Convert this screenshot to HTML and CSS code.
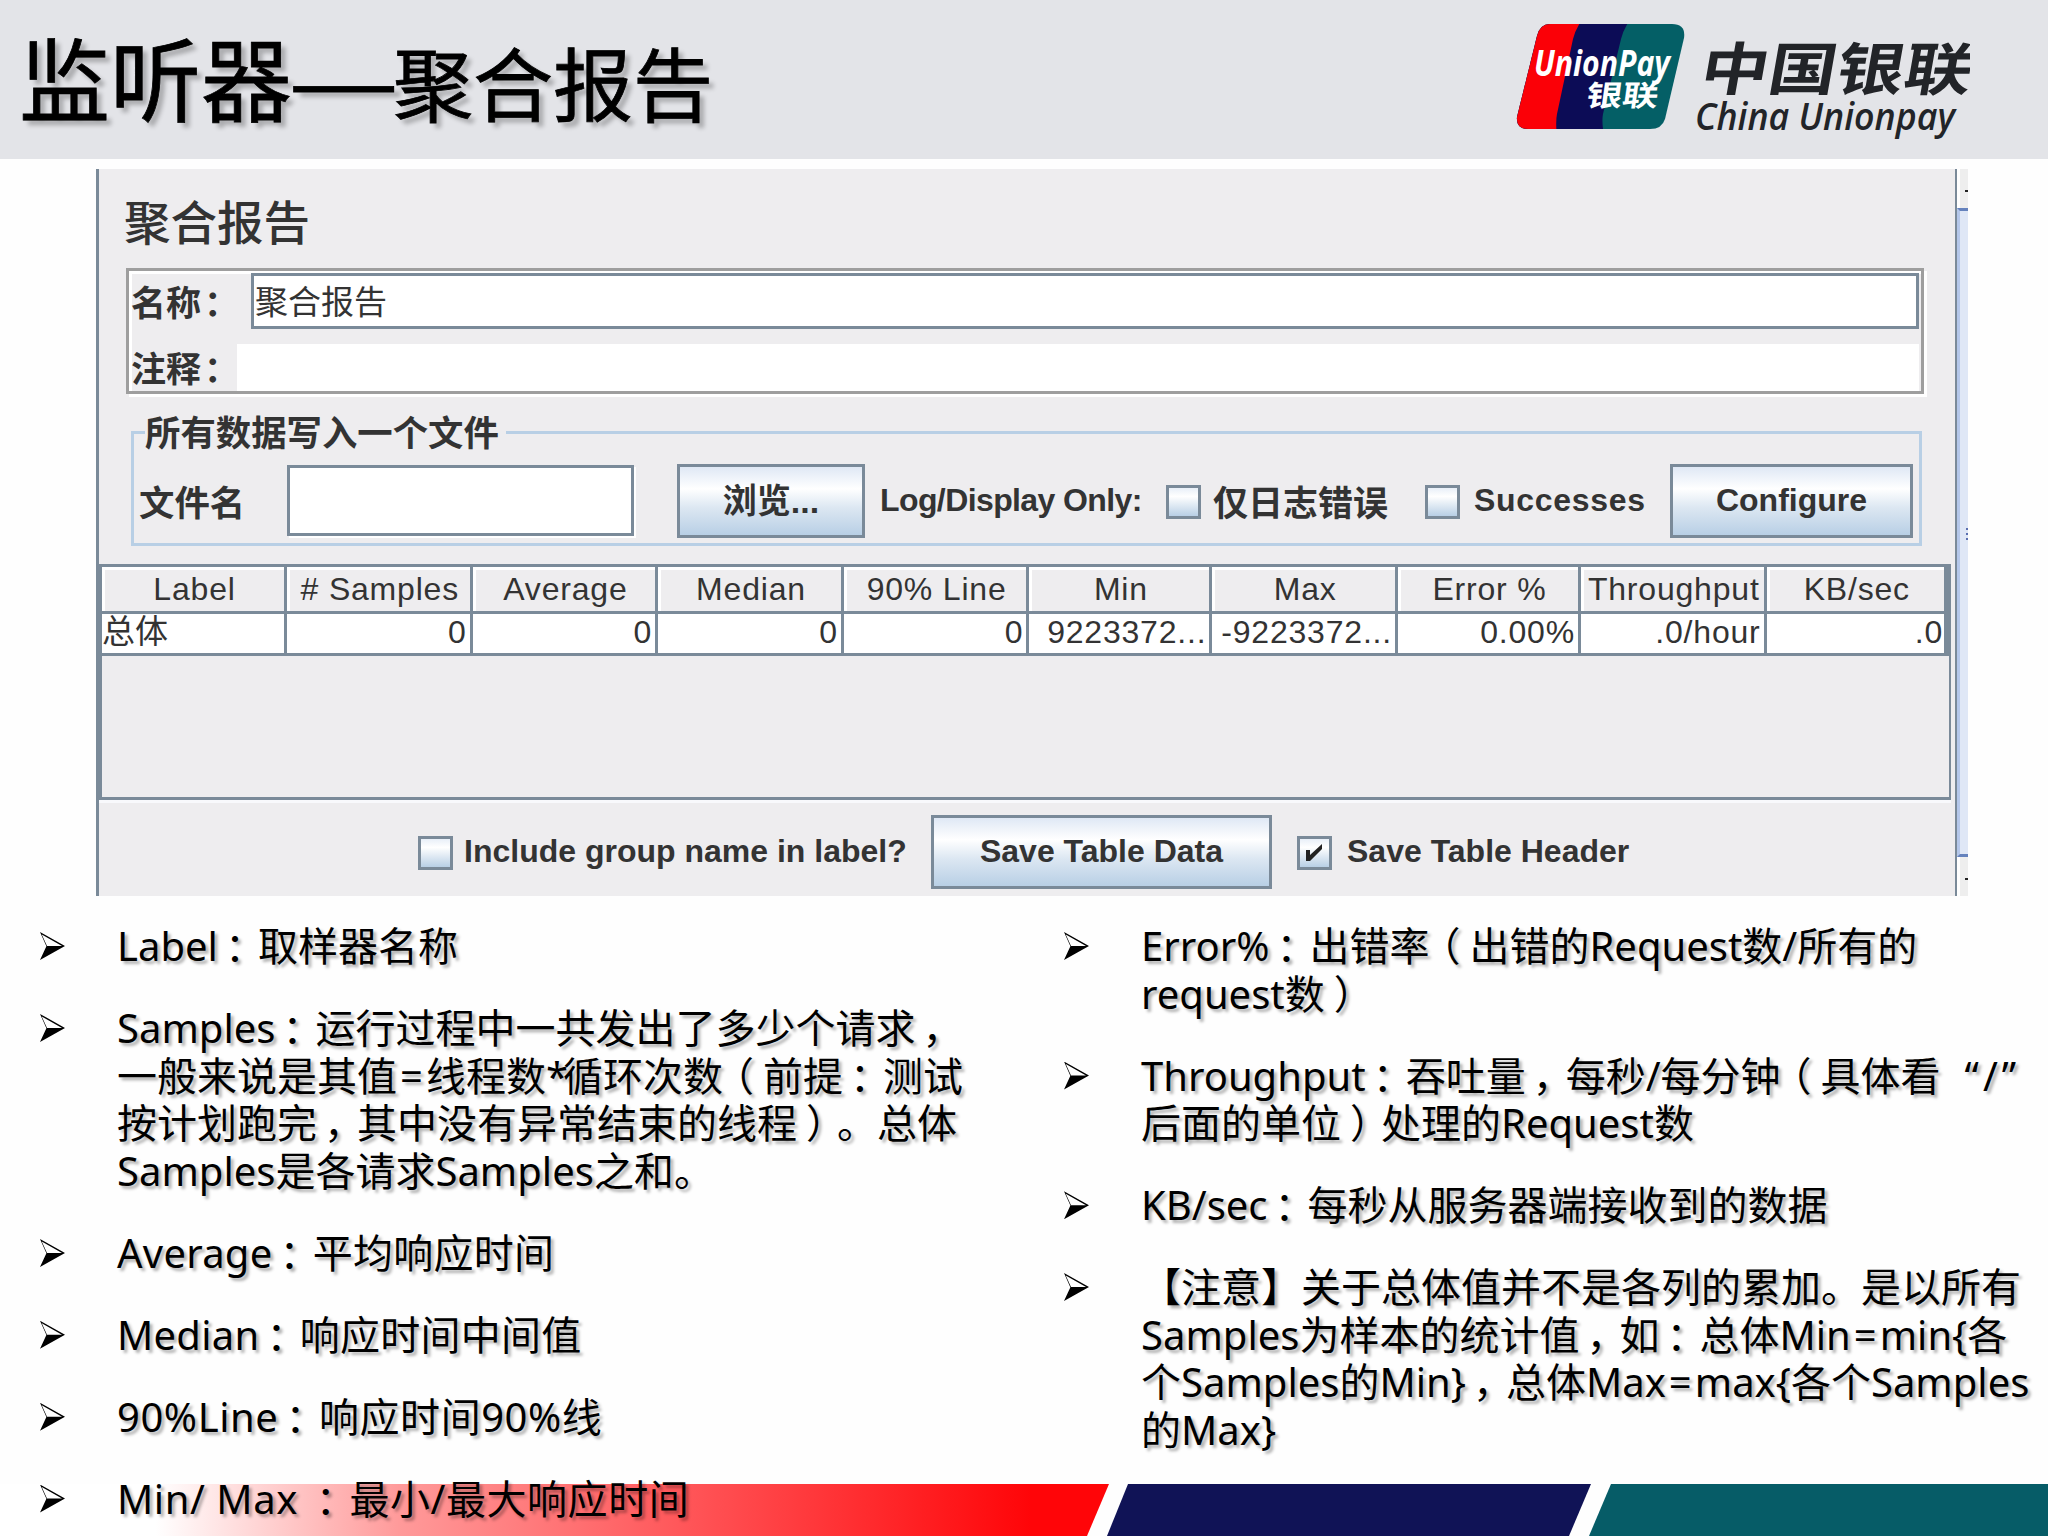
FILE: index.html
```html
<!DOCTYPE html>
<html lang="zh-CN">
<head>
    <meta charset="UTF-8">
    <meta name="viewport" content="width=device-width, initial-scale=1.0">
    <title>监听器—聚合报告</title>
    <link rel="stylesheet" href="styles.css">
</head>
<body>

<header class="header">
    <h1>监听器<span class="dash">—</span><small>聚合报告</small></h1>
    <svg class="logo" width="470" height="130" viewBox="0 0 470 130">
        <defs>
            <clipPath id="card">
                <path d="M50 10H172Q186 10 184 24L165 105Q162 115 150 115H28Q16 115 17 103L37 22Q40 10 50 10Z"/>
            </clipPath>
        </defs>
        <g clip-path="url(#card)">
            <rect width="190" height="130" fill="#045f66"/>
            <path d="M0 0H134Q124 13 121 25L103 100Q101 110 106 130H0Z" fill="#0c0c56"/>
            <path d="M0 0H86Q76 13 73 25L57 100Q55 110 58 130H0Z" fill="#fb0007"/>
        </g>
        <g class="logo-card">
            <text x="34" y="62" font-size="35" textLength="136" lengthAdjust="spacingAndGlyphs" font-style="italic">UnionPay</text>
            <text transform="translate(85 92) skewX(-8)" font-size="29" textLength="72" lengthAdjust="spacingAndGlyphs">银联</text>
        </g>
        <g class="logo-name">
            <text transform="translate(198 76) skewX(-10)" font-size="57" textLength="271" lengthAdjust="spacingAndGlyphs" class="cn">中国银联</text>
            <text x="195" y="116" font-size="38" textLength="260" lengthAdjust="spacingAndGlyphs" class="en">China Unionpay</text>
        </g>
    </svg>
</header>

<section class="window">
    <div class="main">
        <h2>聚合报告</h2>

        <div class="name-box">
            <label><span>名称<q>：</q></span><div class="field">聚合报告</div></label>
            <label><span>注释<q>：</q></span><div class="field plain"></div></label>
        </div>

        <div class="file-box">
            <div class="legend">所有数据写入一个文件</div>
            <span class="file-label">文件名</span>
            <div class="file-input"></div>
            <div class="button browse">浏览...</div>
            <span class="log">Log/Display Only:</span>
            <i class="check"></i>
            <span class="errors">仅日志错误</span>
            <i class="check"></i>
            <span class="successes">Successes</span>
            <div class="button configure">Configure</div>
        </div>

        <div class="table-box">
            <table>
                <colgroup>
                    <col class="c1"><col class="c2"><col class="c2"><col class="c2"><col class="c2">
                    <col class="c3"><col class="c2"><col class="c3"><col class="c2"><col>
                </colgroup>
                <tr>
                    <th>Label</th>
                    <th># Samples</th>
                    <th>Average</th>
                    <th>Median</th>
                    <th>90% Line</th>
                    <th>Min</th>
                    <th>Max</th>
                    <th>Error %</th>
                    <th>Throughput</th>
                    <th>KB/sec</th>
                </tr>
                <tr>
                    <td class="first">总体</td>
                    <td>0</td>
                    <td>0</td>
                    <td>0</td>
                    <td>0</td>
                    <td>9223372...</td>
                    <td>-9223372...</td>
                    <td>0.00%</td>
                    <td>.0/hour</td>
                    <td class="last">.0</td>
                </tr>
            </table>
        </div>

        <div class="save-row">
            <i class="check"></i>
            <span class="include">Include group name in label?</span>
            <div class="button save">Save Table Data</div>
            <i class="check"><svg width="30" height="28" viewBox="0 0 30 28"><path d="M6 11H10V16L22 5V10L10 22H6Z" fill="#222"/></svg></i>
            <span class="save-header">Save Table Header</span>
        </div>
    </div>
    <div class="rail">
        <div class="rail-end"></div>
        <div class="rail-bar"><b></b><b></b><b></b></div>
        <div class="rail-end"></div>
    </div>
</section>

<svg class="stripes" width="2048" height="52" viewBox="0 0 2048 52">
    <defs>
        <linearGradient id="red">
            <stop offset="0.14" stop-color="#fff"/>
            <stop offset="0.36" stop-color="#ff9a9a"/>
            <stop offset="0.62" stop-color="#ff5558"/>
            <stop offset="0.93" stop-color="#ff0508"/>
        </linearGradient>
    </defs>
    <path d="M0 0H1109L1087 52H0Z" fill="url(#red)"/>
    <path d="M1128 0H1591L1569 52H1107Z" fill="#101356"/>
    <path d="M1611 0H2048V52H1589Z" fill="#065c67"/>
</svg>

<div class="notes">
    <ul>
        <li>Label<q>：</q>取样器名称</li>
        <li>Samples<q>：</q>运行过程中一共发出了多少个请求<q>，</q><br>一般来说是其值<b>=</b>线程数<i>*</i>循环次数<em>（</em>前提<q>：</q>测试<br>按计划跑完<q>，</q>其中没有异常结束的线程<s>）</s>。总体<br>Samples是各请求Samples之和。</li>
        <li class="wide">Average<q>：</q>平均响应时间</li>
        <li class="wide">Median<q>：</q>响应时间中间值</li>
        <li class="wider">90%Line<q>：</q>响应时间90%线</li>
        <li class="wider">Min/ Max <q>：</q>最小/最大响应时间</li>
    </ul>
    <ul>
        <li>Error%<q>：</q>出错率<em>（</em>出错的Request数/所有的<br>request数<s>）</s></li>
        <li>Throughput<q>：</q>吞吐量<q>，</q>每秒/每分钟<em>（</em>具体看<span class="quote">“/</span>”<br>后面的单位<s>）</s>处理的Request数</li>
        <li>KB/sec<q>：</q>每秒从服务器端接收到的数据</li>
        <li>【注意】关于总体值并不是各列的累加。是以所有<br>Samples为样本的统计值<q>，</q>如<q>：</q>总体Min<b>=</b>min{各<br>个Samples的Min}<q>，</q>总体Max<b>=</b>max{各个Samples<br>的Max}</li>
    </ul>
</div>

</body>
</html>
```
FILE: styles.css
```css
* {
    box-sizing: border-box;
}

body {
    margin: 0;
    width: 2048px;
    height: 1536px;
    position: relative;
    overflow: hidden;
    background: #fefefe;
    color: #000;
    font-family: "Noto Sans", "Noto Sans CJK SC", sans-serif;
    text-spacing-trim: space-all;
}

/* header */
.header {
    display: flex;
    justify-content: space-between;
    height: 159px;
    padding: 14px 78px 0 19px;
    background: #e3e4e8;
}

h1 {
    margin: -4px 0 0;
    font-size: 91px;
    font-weight: 400;
    line-height: 130px;
    white-space: nowrap;
    font-family: "Noto Sans CJK SC", sans-serif;
    text-shadow: 5px 5px 4px rgba(0, 0, 0, 0.25);
    -webkit-text-stroke: 0.8px #000;
}

h1 small {
    font-size: 80px;
}

.dash {
    display: inline-block;
    width: 101px;
    font-size: 91px;
    line-height: 90px;
    transform: translateX(-4px) scaleX(1.37);
    transform-origin: left;
}

.logo-card {
    fill: #fff;
    font-weight: 700;
    font-family: "Open Sans", "Noto Sans CJK SC", sans-serif;
}

.logo-name {
    fill: #222428;
}

.logo-name .cn {
    font-family: "Noto Sans CJK SC", sans-serif;
    font-weight: 700;
}

.logo-name .en {
    font-family: "Open Sans", sans-serif;
    font-weight: 600;
    font-style: italic;
}

/* report window */
.window {
    display: flex;
    width: 1872px;
    height: 727px;
    margin: 10px 0 0 96px;
    color: #333;
    font-family: "Liberation Sans", "Noto Sans CJK SC", sans-serif;
    font-size: 32px;
    white-space: nowrap;
}

.main {
    width: 1861px;
    background: #eeedef;
    border-left: 3px solid #7a8a99;
    border-right: 2px solid #7a8a99;
}

h2 {
    margin: 0 0 0 25px;
    height: 99px;
    line-height: 110px;
    font-size: 46.5px;
    font-weight: 500;
}

.name-box {
    width: 1798px;
    height: 126px;
    margin-left: 27px;
    padding: 2px 2px 0;
    border: 3px solid #9e9e9e;
    box-shadow: 3px 3px 0 #fff, inset 3px 3px 0 #fff;
}

.name-box label {
    display: flex;
    align-items: center;
    height: 56px;
    font-weight: 700;
    font-size: 35px;
}

.name-box label + label {
    margin-top: 15px;
    height: 47px;
}

.name-box span {
    width: 120px;
    margin-top: -2px;
}

.name-box q {
    margin-left: 3px;
}

.field {
    flex: 1;
    height: 56px;
    line-height: 54px;
    padding-left: 1px;
    background: #fff;
    border: 3px solid #7a8a99;
    font-size: 33px;
    font-weight: 400;
}

.field.plain {
    height: 47px;
    margin-left: -14px;
    border: 0;
}

.file-box {
    position: relative;
    display: flex;
    align-items: center;
    width: 1791px;
    height: 115px;
    margin: 37px 0 0 32px;
    padding: 24px 0 0 5px;
    border: 3px solid #b8cfe5;
    font-weight: 700;
}

.legend {
    position: absolute;
    left: 11px;
    top: -22px;
    width: 361px;
    height: 44px;
    line-height: 44px;
    background: #eeedef;
    font-size: 35.4px;
}

.file-label {
    width: 148px;
    font-size: 35.4px;
}

.file-input {
    width: 347px;
    height: 71px;
    background: #fff;
    border: 3px solid #7a8a99;
    box-shadow: 2px 2px 0 #fff;
}

.button {
    height: 74px;
    line-height: 66px;
    text-align: center;
    font-weight: 700;
    border: 3px solid #7a8a99;
    background: linear-gradient(#dfe8f5, #fff 32%, #dce7f2 60%, #b8cfe5);
}

.browse {
    width: 188px;
    margin-left: 43px;
    line-height: 68px;
    font-size: 34px;
}

.log {
    width: 301px;
    padding-left: 15px;
    letter-spacing: -0.6px;
}

.check {
    width: 35px;
    height: 34px;
    margin-top: 2px;
    border: 3px solid #7a8a99;
    background: linear-gradient(#e8eff8, #fff 30%, #b8cfe5);
}

.check svg {
    display: block;
}

.errors {
    width: 224px;
    padding-left: 12px;
    font-size: 35px;
}

.successes {
    width: 210px;
    padding-left: 14px;
    letter-spacing: 0.7px;
}

.configure {
    width: 243px;
}

.table-box {
    width: 1852px;
    height: 236px;
    margin: 18px 0 0;
    border: 3px solid #7a8a99;
    border-right-width: 2px;
    box-shadow: 0 3px 0 #f8f9fc;
}

table {
    width: 1848px;
    table-layout: fixed;
    border-collapse: separate;
    border-spacing: 0;
    border-right: 3px solid #7a8a99;
}

.c1 {
    width: 185px;
}

.c2 {
    width: 185.6px;
}

.c3 {
    width: 183px;
}

th,
td {
    padding: 0;
    letter-spacing: 0.8px;
    font-weight: 400;
    border-right: 3px solid #7a8a99;
    border-bottom: 3px solid #7a8a99;
}

th {
    height: 47px;
    line-height: 44px;
    padding-left: 3px;
    background: #eeedef;
    box-shadow: inset 3px 3px 0 #fff;
}

td {
    height: 42px;
    line-height: 36px;
    padding: 0 3px 3px 0;
    text-align: right;
    background: #fff;
}

td.first {
    text-align: left;
    font-size: 33px;
    letter-spacing: 0;
}

td.last {
    padding-right: 1px;
}

.save-row {
    display: flex;
    align-items: center;
    height: 96px;
    padding: 8px 0 0 319px;
    font-weight: 700;
}

.include {
    width: 478px;
    padding-left: 11px;
}

.save {
    width: 341px;
    margin-right: 25px;
}

.save-header {
    padding-left: 15px;
}

.include,
.save-header {
    margin-top: -2px;
}

.rail {
    width: 11px;
}

.rail-end {
    height: 39px;
    background: linear-gradient(#222, #222) 100% 21px / 3px 2px no-repeat #eeeeee;
    border-left: 3px solid #fff;
}

.rail-bar {
    height: 649px;
    padding: 317px 0 0 6px;
    background: #dfe7f6;
    border: solid #6582bd;
    border-width: 3px 0;
    border-left: 3px solid #b4c7ea;
}

.rail-bar b {
    display: block;
    height: 2px;
    margin-bottom: 3px;
    background: #5a6fb0;
}

/* bottom stripes, the notes run over them */
.stripes {
    position: absolute;
    left: 0;
    bottom: 0;
    z-index: -1;
}

.notes {
    display: grid;
    grid-template-columns: 1024px 1024px;
    padding-top: 26px;
    font-size: 40px;
    line-height: 47.7px;
    white-space: nowrap;
    text-shadow: 3px 3px 3px rgba(0, 0, 0, 0.3);
}

.notes ul {
    margin: 0;
    padding: 0 0 0 117px;
    list-style: none;
}

.notes li {
    position: relative;
    margin-bottom: 34.2px;
}

.notes li::before {
    content: "";
    position: absolute;
    left: -77px;
    top: 10px;
    width: 25px;
    height: 28px;
    background: #000;
    clip-path: polygon(0 0, 100% 50%, 0 100%, 26% 50%, 88% 50%, 7% 9%, 28% 50%, 26% 52%);
}

.notes b {
    padding: 0 3px;
    font-weight: 400;
}

.notes i {
    font-style: normal;
    letter-spacing: -5px;
}

.wide {
    letter-spacing: 0.25px;
}

.wider {
    letter-spacing: 0.55px;
}

/* centred punctuation */
q {
    quotes: none;
}

.notes q {
    margin: 0 -7px 0 7px;
}

.notes em {
    font-style: normal;
    margin: 0 9px 0 -9px;
}

.notes s {
    text-decoration: none;
    margin: 0 -9px 0 9px;
}

.quote {
    margin-left: 24px;
    letter-spacing: 4px;
}
```
